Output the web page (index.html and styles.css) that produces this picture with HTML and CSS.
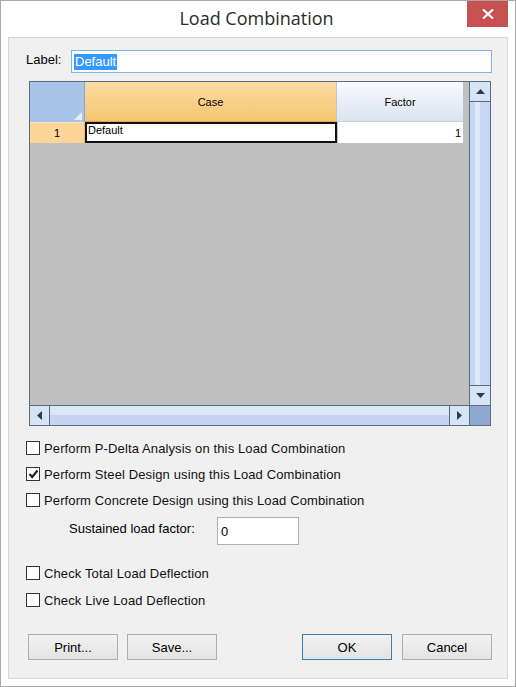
FILE: index.html
```html
<!DOCTYPE html>
<html>
<head>
<meta charset="utf-8">
<link rel="stylesheet" href="styles.css">
</head>
<body>
<div class="window">
  <div class="titlebar">
    <div></div>
    <div class="title">Load Combination</div>
    <div class="close"><svg width="12" height="10" viewBox="0 0 12 10"><path d="M1 0.5 L11 9.5 M11 0.5 L1 9.5" stroke="#fff" stroke-width="2.2"/></svg></div>
  </div>
  <div class="content">
    <div class="label-row">
      <span class="lbl">Label:</span>
      <div class="textbox focused"><span class="sel">Default</span></div>
    </div>
    <div class="grid">
      <div class="grid-main">
        <div class="table">
          <div class="corner"><svg class="tri" width="8" height="8" viewBox="0 0 8 8"><path d="M8 0 L8 8 L0 8 Z" fill="#e8eff9"/></svg></div>
          <div class="hcase">Case</div>
          <div class="hfactor">Factor</div>
          <div class="rowhead">1</div>
          <div class="ccase">Default</div>
          <div class="cfactor">1</div>
        </div>
      </div>
      <div class="vscroll">
        <div class="sbtn"><svg width="9" height="5" viewBox="0 0 9 5"><path d="M4.5 0 L9 5 L0 5 Z" fill="#2d3b52"/></svg></div>
        <div class="vtrack"></div>
        <div class="sbtn"><svg width="9" height="5" viewBox="0 0 9 5"><path d="M0 0 L9 0 L4.5 5 Z" fill="#2d3b52"/></svg></div>
      </div>
      <div class="hscroll">
        <div class="sbtn"><svg width="5" height="9" viewBox="0 0 5 9"><path d="M5 0 L5 9 L0 4.5 Z" fill="#2d3b52"/></svg></div>
        <div class="htrack"></div>
        <div class="sbtn"><svg width="5" height="9" viewBox="0 0 5 9"><path d="M0 0 L5 4.5 L0 9 Z" fill="#2d3b52"/></svg></div>
      </div>
      <div class="scorner"></div>
    </div>
    <div class="checks">
      <label class="chk"><span class="box"></span>Perform P-Delta Analysis on this Load Combination</label>
      <label class="chk"><span class="box"><svg width="11" height="10" viewBox="0 0 11 10"><path d="M1.5 5 L4.2 8 L9.5 1.5" fill="none" stroke="#222" stroke-width="2.2"/></svg></span>Perform Steel Design using this Load Combination</label>
      <label class="chk"><span class="box"></span>Perform Concrete Design using this Load Combination</label>
      <div class="sustained">
        <span class="slbl">Sustained load factor:</span>
        <div class="textbox small">0</div>
      </div>
    </div>
    <div class="checks2">
      <label class="chk"><span class="box"></span>Check Total Load Deflection</label>
      <label class="chk"><span class="box"></span>Check Live Load Deflection</label>
    </div>
    <div class="buttons">
      <div class="btn">Print...</div>
      <div class="btn">Save...</div>
      <div class="spacer"></div>
      <div class="btn default">OK</div>
      <div class="btn">Cancel</div>
    </div>
  </div>
</div>
</body>
</html>
```

FILE: styles.css
```css
html, body {
  margin: 0;
  padding: 0;
  background: #ffffff;
}

.window {
  box-sizing: border-box;
  width: 516px;
  height: 687px;
  border: 1px solid #a9a9a9;
  background: #ffffff;
  padding: 0 7px 7px 7px;
  display: flex;
  flex-direction: column;
  font-family: "Liberation Sans", Arial, sans-serif;
  font-size: 13px;
  color: #000;
}

.titlebar {
  height: 36px;
  display: grid;
  grid-template-columns: 1fr auto 1fr;
  align-items: start;
}

.title {
  font-family: "Open Sans", "Noto Sans", sans-serif;
  font-size: 18px;
  color: #2b2b2b;
  padding-top: 5px;
  margin-left: -3px;
}

.close {
  justify-self: end;
  width: 41px;
  height: 26px;
  background: #c75050;
  display: flex;
  align-items: center;
  justify-content: center;
}

.content {
  flex: 1;
  background: #f0f0f0;
  border: 1px solid #d6d6d6;
  padding: 12px 0 0 17px;
  display: flex;
  flex-direction: column;
}

.label-row {
  display: flex;
  align-items: center;
  height: 23px;
}

.lbl {
  width: 45px;
  margin-top: -5px;
}

.textbox {
  box-sizing: border-box;
  background: #fff;
  border: 1px solid #abadb3;
  height: 23px;
  display: flex;
  align-items: center;
  padding-left: 2px;
}

.textbox.focused {
  border-color: #7eb4ea;
  width: 421px;
}

.sel {
  background: #3399ff;
  color: #fff;
  line-height: 16px;
  padding: 0 1px;
}

.grid {
  margin-top: 8px;
  margin-left: 3px;
  box-sizing: border-box;
  width: 462px;
  height: 345px;
  border: 1px solid #5d6b80;
  display: grid;
  grid-template-columns: 439px 21px;
  grid-template-rows: 323px 20px;
}

.grid-main {
  background: #c0c0c0;
}

.table {
  display: grid;
  grid-template-columns: 55px 252px 126px;
  grid-template-rows: 40px 21px;
  font-size: 11px;
}

.corner {
  background: #a9c4e9;
  border-right: 1px solid #8aa4c8;
  display: flex;
  align-items: flex-end;
  justify-content: flex-end;
  padding: 0 2px 2px 0;
}

.hcase {
  background: linear-gradient(#fcdca4, #f5c470);
  border-right: 1px solid #c4c4c4;
  border-bottom: 1px solid #e3a44a;
  display: flex;
  align-items: center;
  justify-content: center;
}

.hfactor {
  background: linear-gradient(#f9fbfe, #d9e3f1);
  border-bottom: 1px solid #c8cfd9;
  display: flex;
  align-items: center;
  justify-content: center;
}

.rowhead {
  background: #fcd597;
  border-right: 1px solid #e6ba72;
  border-top: 1px solid #f8e3bb;
  display: flex;
  align-items: center;
  justify-content: center;
}

.ccase {
  box-sizing: border-box;
  background: #fff;
  border: 2px solid #111;
  padding: 0 0 0 1px;
  line-height: 13px;
}

.cfactor {
  background: #fff;
  border-left: 1px solid #c8c8c8;
  display: flex;
  align-items: center;
  justify-content: flex-end;
  padding-right: 2px;
}

.vscroll {
  display: flex;
  flex-direction: column;
  border-left: 1px solid #5d6b80;
}

.vscroll .sbtn {
  height: 19px;
}

.vtrack {
  flex: 1;
  background: linear-gradient(90deg, #c4d6f1 0, #c4d6f1 5px, #dde8f8 5px, #dde8f8 10px, #c4d6f1 10px);
  border-top: 1px solid #5d6b80;
  border-bottom: 1px solid #5d6b80;
}

.sbtn {
  background: #d7e4f6;
  display: flex;
  align-items: center;
  justify-content: center;
}

.hscroll {
  display: flex;
  border-top: 1px solid #5d6b80;
}

.hscroll .sbtn {
  width: 19px;
}

.htrack {
  flex: 1;
  background: linear-gradient(#dbe6f7 0, #dbe6f7 9px, #c3d5f1 9px);
  border-left: 1px solid #5d6b80;
  border-right: 1px solid #5d6b80;
}

.scorner {
  background: #8fa9d3;
  border-top: 1px solid #5d6b80;
  border-left: 1px solid #5d6b80;
}

.checks {
  margin-top: 15px;
  display: flex;
  flex-direction: column;
  gap: 12px;
}

.chk {
  display: flex;
  align-items: center;
  height: 14px;
  color: #111;
  letter-spacing: 0.12px;
}

.box {
  box-sizing: border-box;
  width: 14px;
  height: 14px;
  border: 1px solid #333;
  background: #fff;
  margin-right: 4px;
  display: flex;
  align-items: center;
  justify-content: center;
}

.sustained {
  display: flex;
  align-items: center;
  margin-top: -2px;
  padding-left: 43px;
}

.slbl {
  width: 148px;
  margin-top: -6px;
}

.textbox.small {
  width: 82px;
  height: 28px;
  padding-left: 3px;
}

.checks2 {
  margin-top: 21px;
  display: flex;
  flex-direction: column;
  gap: 13px;
}

.buttons {
  margin-top: 27px;
  display: flex;
  padding-left: 2px;
  padding-right: 15px;
}

.btn {
  box-sizing: border-box;
  width: 90px;
  height: 26px;
  border: 1px solid #adadad;
  background: linear-gradient(#f2f2f2, #e3e3e3);
  display: flex;
  align-items: center;
  justify-content: center;
  margin-right: 9px;
}

.btn:last-child {
  margin-right: 0;
  margin-left: 10px;
}

.btn.default {
  border-color: #3c7fb1;
  margin-right: 0;
}

.spacer {
  flex: 1;
}
```
